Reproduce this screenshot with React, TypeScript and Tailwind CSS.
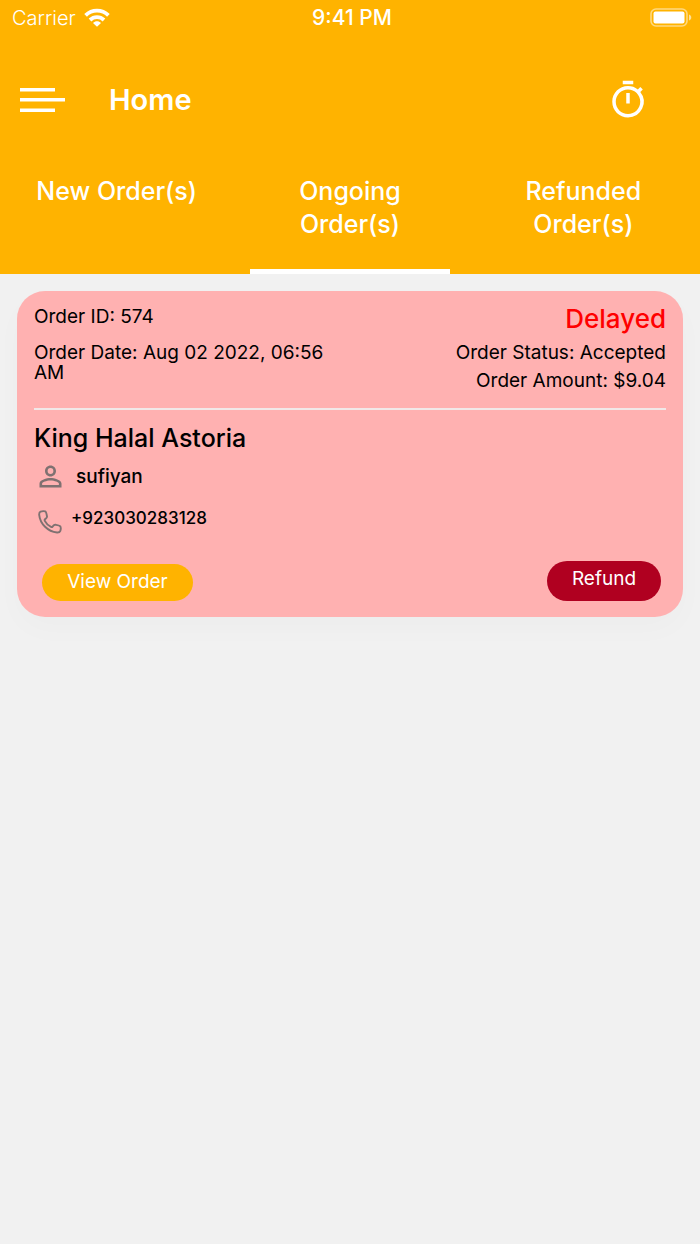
import { MdOutlineTimer, MdPersonOutline } from "react-icons/md";
import { useState } from "react";

const tabs = ["New Order(s)", "Ongoing Order(s)", "Refunded Order(s)"];

type Order = {
    id: number;
    date: string;
    status: string;
    amount: string;
    restaurant: string;
    customer: string;
    phone: string;
};

const order: Order = {
    id: 574,
    date: "Aug 02 2022, 06:56 AM",
    status: "Accepted",
    amount: "$9.04",
    restaurant: "King Halal Astoria",
    customer: "sufiyan",
    phone: "+923030283128",
};

function StatusBar() {
    return (
        <div className="grid h-9 grid-cols-[1fr_auto_1fr] items-center pl-3 pr-2 text-xl">
            <div className="flex items-center gap-2 font-light">
                <span>Carrier</span>
                <svg width="26" height="20" viewBox="0 0 26 20" fill="none" stroke="white" strokeWidth="3.8">
                    <path d="M1.6 7.4C8 1.1 18 1.1 24.4 7.4" />
                    <path d="M6 12c4-3.8 10-3.8 14 0" />
                    <path d="M13 18.8l-4-3.9c2.3-2.1 5.7-2.1 8 0z" fill="white" stroke="none" />
                </svg>
            </div>
            <span className="text-center text-[21px] font-medium">9:41 PM</span>
            <svg className="mb-px justify-self-end" width="42" height="20" viewBox="0 0 42 20">
                <rect x="1" y="1" width="36" height="17" rx="5" fill="none" stroke="white" strokeOpacity="0.5" strokeWidth="1.6" />
                <rect x="3.5" y="3.5" width="31" height="12" rx="2" fill="white" />
                <path d="M39 6.5c3 1 3 5 0 6z" fill="white" fillOpacity="0.6" />
            </svg>
        </div>
    );
}

function PhoneIcon() {
    return (
        <svg className="mt-2 size-6 text-[#7f7171]" viewBox="0 0 24 24" fill="none" stroke="currentColor" strokeWidth="1.9" strokeLinejoin="round">
            <path d="M2.6 1.6C4.2 1 6 1 7.2 1.4c1 .4 1.5 3.200 1.8 5.100.2 1.300-1 1.800-2 2.700-.5.5-.5 1-.2 1.600 1.400 2.700 3.600 4.800 6.200 6.100.7.3 1.200.2 1.600-.3.8-1 1.500-2 2.800-1.800 1.800.3 4.500.6 5 1.700.5 1.200.4 3.200-.2 4.600-.5 1.300-1.800 1.500-3.200 1.400C10 21.500 2.100 14 1.200 4.800c-.1-1.400.1-2.700 1.400-3.200z" />
        </svg>
    );
}

function OrderCard({ order }: { order: Order }) {
    return (
        <article className="rounded-[28px] bg-[#ffb1b1] px-[17px] pb-4 pt-3 text-black shadow-[0_12px_30px_rgba(0,0,0,0.02)]">
            <div className="flex justify-between border-b-2 border-[#f1e8e8] pb-[13px] text-[19px]">
                <div className="w-[46%]">
                    <p className="leading-7">Order ID: {order.id}</p>
                    <p className="mt-3 leading-5">Order Date: {order.date}</p>
                </div>
                <div className="text-right">
                    <p className="text-[26px] font-medium leading-8 text-[#ff0000]">Delayed</p>
                    <p className="mt-1 leading-7">Order Status: {order.status}</p>
                    <p className="leading-7">Order Amount: {order.amount}</p>
                </div>
            </div>

            <h2 className="mt-3 text-[25px] font-medium leading-8">{order.restaurant}</h2>
            <div className="mt-[6px] flex items-center gap-[9px] text-[19px] font-medium leading-8">
                <MdPersonOutline className="size-[33px] text-[#7f7171]" />
                <span>{order.customer}</span>
            </div>
            <div className="mt-[9px] flex gap-[9px] pl-1 text-[17px] font-medium leading-8">
                <PhoneIcon />
                <span>{order.phone}</span>
            </div>

            <div className="mt-[27px] flex items-end justify-between pl-2 pr-[5px] text-[19px] text-white">
                <button className="h-[37px] w-[151px] rounded-full bg-[#ffb300]">View Order</button>
                <button className="h-10 w-[114px] rounded-full bg-[#b00020] pb-1">Refund</button>
            </div>
        </article>
    );
}

export default function App() {
    const [active, setActive] = useState(1);

    return (
        <div className="min-h-screen bg-[#f1f1f1] font-['Inter',sans-serif]">
            <header className="bg-[#ffb300] text-white">
                <StatusBar />
                <div className="flex h-[127px] items-center pl-5 pr-[51px]">
                    <button aria-label="Menu">
                        <svg width="45" height="26" viewBox="0 0 45 26" fill="white">
                            <path d="M0 1h35v3.500H0zM0 11h45v3.500H0zM0 21.500h35V25H0z" />
                        </svg>
                    </button>
                    <h1 className="ml-11 text-[29px] font-semibold">Home</h1>
                    <button className="ml-auto" aria-label="Timer">
                        <MdOutlineTimer className="size-[42px]" />
                    </button>
                </div>
                <nav className="grid grid-cols-3">
                    {tabs.map((tab, i) => (
                        <button
                            key={tab}
                            onClick={() => setActive(i)}
                            className={`mx-[17px] flex h-[111px] justify-center border-b-[5px] px-5 pt-3 text-[25px] font-medium leading-[33px] ${
                                i === active ? "border-white" : "border-transparent"
                            }`}
                        >
                            <span className="-mx-5">{tab}</span>
                        </button>
                    ))}
                </nav>
            </header>
            <main className="p-[17px]">
                <OrderCard order={order} />
            </main>
        </div>
    );
}
